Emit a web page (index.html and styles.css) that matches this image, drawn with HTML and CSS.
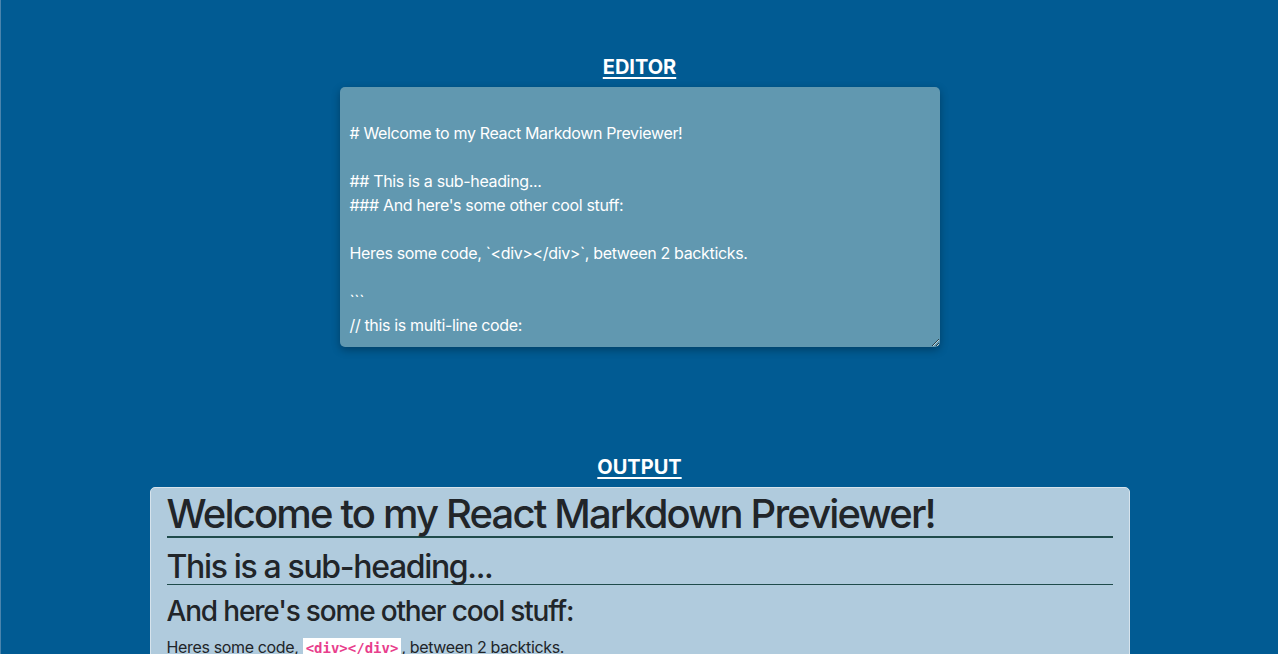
FILE: index.html
```html
<!DOCTYPE html>
<html lang="en">
<head>
<meta charset="utf-8">
<title>Markdown Previewer</title>
<link rel="stylesheet" href="styles.css">
</head>
<body>
<div class="page">
  <section class="editor-section">
    <h4 class="section-title">EDITOR</h4>
    <textarea class="editor" spellcheck="false">

# Welcome to my React Markdown Previewer!

## This is a sub-heading...
### And here's some other cool stuff:

Heres some code, &#96;&lt;div&gt;&lt;/div&gt;&#96;, between 2 backticks.

&#96;&#96;&#96;
// this is multi-line code:

function anotherExample(firstLine, lastLine) {
  if (firstLine == '&#96;&#96;&#96;' &amp;&amp; lastLine == '&#96;&#96;&#96;') {
    return multiLineCode;
  }
}
&#96;&#96;&#96;</textarea>
  </section>
  <section class="output-section">
    <h4 class="section-title">OUTPUT</h4>
    <div class="preview">
      <h1>Welcome to my React Markdown Previewer!</h1>
      <h2>This is a sub-heading...</h2>
      <h3>And here's some other cool stuff:</h3>
      <p>Heres some code, <code>&lt;div&gt;&lt;/div&gt;</code>, between 2 backticks.</p>
    </div>
  </section>
</div>
</body>
</html>
```
FILE: styles.css
```css
html, body {
  margin: 0;
  padding: 0;
  background: #015b93;
}
body {
  font-family: Inter, "Noto Sans", sans-serif;
  color: #212529;
  overflow: hidden;
  height: 654px;
}
.page {
  border-left: 1px solid #4a84ad;
  height: 654px;
  overflow: hidden;
  box-sizing: border-box;
  display: flex;
  flex-direction: column;
  align-items: center;
  padding-top: 55px;
}
.section-title {
  margin: 0 0 8px;
  font-size: 20px;
  line-height: 24px;
  font-weight: 700;
  color: #ffffff;
  text-decoration: underline;
  text-underline-offset: 3px;
  text-align: center;
}
.editor-section {
  display: flex;
  flex-direction: column;
  align-items: center;
}
.editor {
  display: block;
  width: 600px;
  height: 260px;
  box-sizing: border-box;
  margin: 0;
  padding: 10px 10px;
  border: none;
  border-radius: 5px;
  background: #6198b0;
  color: #ffffff;
  font-family: Inter, "Noto Sans", sans-serif;
  font-size: 16px;
  line-height: 24px;
  letter-spacing: -0.35px;
  box-shadow: 0 3px 8px rgba(0, 0, 0, 0.3);
  resize: both;
  overflow: hidden;
  outline: none;
}
.output-section {
  margin-top: 108px;
  display: flex;
  flex-direction: column;
  align-items: center;
  flex-shrink: 0;
}
.preview {
  width: 980px;
  box-sizing: border-box;
  background: #b0cbdd;
  border: 1px solid #d6e3ec;
  border-radius: 5px;
  padding: 0 16px 16px;
}
.preview h1,
.preview h2,
.preview h3 {
  font-weight: 500;
  margin: 0 0 8px;
  padding-top: 4px;
  color: #212529;
  letter-spacing: -0.042em;
}
.preview h1 {
  font-size: 40px;
  line-height: 44px;
  letter-spacing: -0.046em;
  border-bottom: 2px solid #1f4b4b;
}
.preview h2 {
  font-size: 32px;
  line-height: 34.4px;
  border-bottom: 1px solid #1f4b4b;
}
.preview h3 {
  font-size: 28px;
  line-height: 29.6px;
}
.preview p {
  margin: 0 0 16px;
  font-size: 16px;
  line-height: 24px;
  letter-spacing: -0.35px;
}
.preview code {
  font-family: "DejaVu Sans Mono", "Liberation Mono", monospace;
  font-size: 14px;
  font-weight: 700;
  color: #e83e8c;
  background: #ffffff;
  padding: 2px 3px;
  letter-spacing: 0;
}
```
